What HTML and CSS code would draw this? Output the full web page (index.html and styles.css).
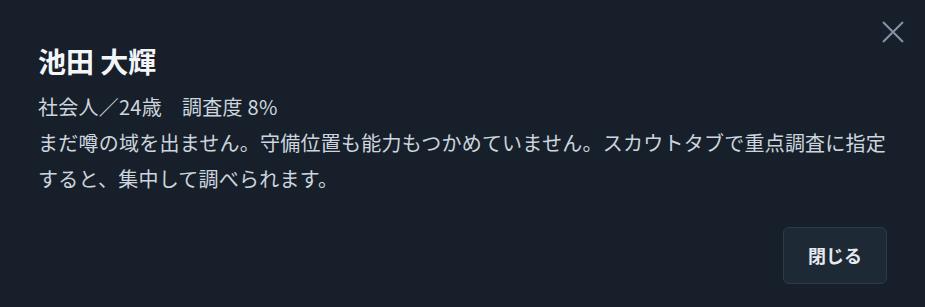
FILE: index.html
```html
<!DOCTYPE html>
<html lang="ja">
<head>
  <meta charset="UTF-8" />
  <title>選手詳細</title>
  <meta name="viewport" content="width=device-width, initial-scale=1.0" />
  <link rel="stylesheet" href="styles.css">
</head>
<body>

  <div class="dialog">
    <button class="close" aria-label="閉じる">
      <svg width="22" height="22" viewBox="0 0 22 22">
        <path d="M1 1 L21 21 M21 1 L1 21" stroke="currentColor" stroke-width="2" fill="none" />
      </svg>
    </button>

    <h2 class="name">池田 大輝</h2>
    <p class="meta">社会人／24歳　調査度 8%</p>
    <p class="desc">まだ噂の域を出ません。守備位置も能力もつかめていません。スカウトタブで重点調査に指定すると、集中して調べられます。</p>

    <div class="actions">
      <button class="btn">閉じる</button>
    </div>
  </div>

</body>
</html>
```

FILE: styles.css
```css
* { margin: 0; padding: 0; box-sizing: border-box; }
html, body { height: 100%; background: #17202a; }
body { font-family: 'Noto Sans CJK JP', 'Noto Sans', sans-serif; color: #cdd5df; }

.dialog {
  position: relative; padding: 43px 38px 23px;
}

.close {
  position: absolute; top: 21px; right: 21px; width: 22px; height: 22px;
  background: none; border: none; color: #8494a8; cursor: pointer;
  display: flex;
}

.name {
  font-size: 28px; line-height: 36px; font-weight: bold; color: #f3f5f8;
  margin-bottom: 10px;
}

.meta, .desc { font-size: 20px; line-height: 36px; letter-spacing: 0.24px; }
.desc { margin-right: -8px; }

.actions { display: flex; justify-content: flex-end; margin-top: 30px; }

.btn {
  font-family: inherit; font-size: 18px; font-weight: bold; line-height: 25px;
  color: #e6eaf0; background: #1e2936; border: 1px solid #2e3a48;
  border-radius: 6px; padding: 15px 24px; cursor: pointer;
}
```
